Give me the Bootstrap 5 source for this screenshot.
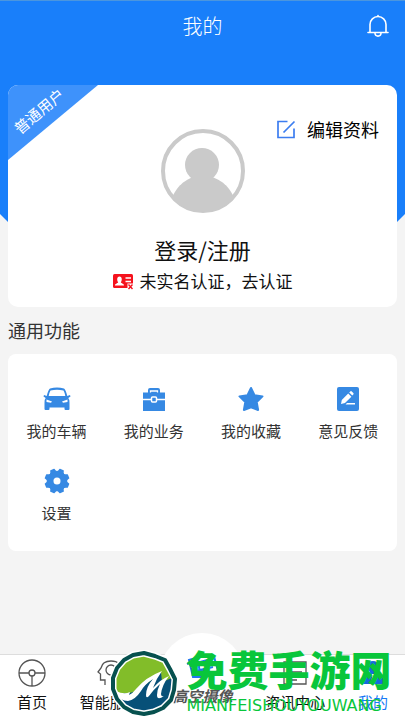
<!DOCTYPE html>
<html lang="zh-CN">
<head>
<meta charset="utf-8">
<meta name="viewport" content="width=device-width, initial-scale=1">
<title>我的</title>
<link href="https://cdn.jsdelivr.net/npm/bootstrap@5.3.0/dist/css/bootstrap.min.css" rel="stylesheet">
<style>
body{font-family:"Noto Sans CJK SC",sans-serif;background:#f4f4f4;color:#111}
svg{display:block;flex-shrink:0}
a,button{color:inherit;text-decoration:none}
.page-wrap{isolation:isolate}
.page-wrap::before{content:"";position:absolute;z-index:-1;inset:0 0 auto;height:224px;background:#197ffa;border-top:1px solid #4b96de;clip-path:polygon(0 0,100% 0,100% 214px,calc(100% - 10px) 100%,10px 100%,0 214px)}
.top-bar{height:52px;display:grid;grid-template-columns:1fr auto 1fr;padding:0 16px}
.top-title{font-size:20px;line-height:28px;font-weight:300}
.user-card{margin-top:33px;border-radius:10px;padding-bottom:14px}
.ribbon{width:90px;height:75px;isolation:isolate}
.ribbon::before{content:"";position:absolute;z-index:-1;inset:0;background:#3e92fb;clip-path:polygon(0 0,100% 0,0 100%)}
.ribbon-text{left:1px;top:16px;font-size:15px;line-height:20px;transform:rotate(-40deg)}
.profile-row{display:grid;grid-template-columns:1fr auto 1fr;padding-top:34px}
.avatar{margin-top:10px}
.edit-btn{font-size:18px;line-height:20px;margin-right:18px;gap:11px}
.login-link{font-size:22px;line-height:28px;margin-top:22px}
.verify-link{font-size:17px;line-height:24px;margin-top:6px;gap:7px}
.section-title{font-size:18px;line-height:25px;margin:11px 0;color:#333}
.tools-card{border-radius:8px;padding-top:32px;padding-bottom:1px}
.tool{font-size:15px;line-height:18px;gap:10px;margin-bottom:28px;color:#333}
.tab-bar{height:66px;padding:0 17px;border-top:1px solid #ddd;isolation:isolate}
.tab{font-size:15px;line-height:20px;gap:5px;padding-top:4px;white-space:nowrap}
.tab-main{padding-top:0;gap:1px;color:#555;font-style:italic}
.tab-main::before{content:"";position:absolute;z-index:-1;width:86px;height:86px;border-radius:50%;background:#fff;top:-22px;left:50%;margin-left:-43px}
.tab-current{color:#1779f5}
.brand{left:50%;margin-left:-93px;bottom:4px;gap:9px;pointer-events:none;color:#08c63b;white-space:nowrap}
.brand-name{font-size:41px;line-height:36px;font-weight:900}
.brand-latin{font-family:"DejaVu Sans",sans-serif;font-size:16px;line-height:20px;padding-top:10px}
</style>
<script src="https://cdn.jsdelivr.net/npm/bootstrap@5.3.0/dist/js/bootstrap.bundle.min.js"></script>
</head>
<body>
<div class="page-wrap position-relative min-vh-100 d-flex flex-column overflow-hidden">
  <header class="top-bar align-items-center text-white">
    <span></span>
    <h1 class="top-title m-0">我的</h1>
    <button class="btn p-0 border-0 ms-auto text-white" aria-label="通知">
      <svg width="22" height="24" viewBox="0 0 22 24" fill="none" stroke="currentColor" stroke-width="1.600" stroke-linecap="round"><path d="M3 18v-7.500a8 8 0 0 1 16 0V18M1 18.500h20M8 19.500c.5 3.500 5.500 3.500 6 0M11 1.500v1"/></svg>
    </button>
  </header>
  <main class="px-2">
    <section class="user-card bg-white position-relative overflow-hidden">
      <div class="ribbon position-absolute top-0 start-0 text-white"><div class="ribbon-text position-absolute">普通用户</div></div>
      <div class="profile-row">
        <span></span>
        <svg class="avatar" width="84" height="84" viewBox="0 0 84 84"><defs><clipPath id="face"><circle cx="42" cy="42" r="41"/></clipPath></defs><circle cx="42" cy="42" r="40" fill="#fff" stroke="#cacaca" stroke-width="4"/><g clip-path="url(#face)" fill="#cacaca"><circle cx="41" cy="36" r="17"/><path d="M10 72c5-16 15-21 22-24h19c8 3 18 8 23 24v12H10z"/></g></svg>
        <button class="edit-btn btn p-0 border-0 ms-auto align-self-start d-flex align-items-center text-black">
          <svg width="19" height="19" viewBox="0 0 19 19" fill="none" stroke="#3c7df0" stroke-width="1.700"><path d="M10.500 1.500H1v16h16V8.500M6.500 12.500l11-11"/></svg>编辑资料
        </button>
      </div>
      <a href="#login" class="login-link d-block text-center">登录/注册</a>
      <a href="#verify" class="verify-link d-flex justify-content-center align-items-center">
        <svg width="20" height="17" viewBox="0 0 20 17"><rect y="1" width="20" height="14" rx="1.500" fill="#f5121d"/><path d="M2 12.500c0-2 2.500-2 3.200-3C3.500 7 4 3.500 6.500 3.500S9.500 7 7.800 9.500c.7 1 3.200 1 3.200 3z" fill="#fff"/><path d="M12.500 5H18M12.500 8.500H18" stroke="#fff" stroke-width="1.300"/><path d="M14.500 10.500H20V17h-5.500z" fill="#fff"/><path d="M15.500 11.500l4 4.500m0-4.500l-4 4.500" stroke="#f5121d" stroke-width="1.400"/></svg>未实名认证，去认证
      </a>
    </section>
    <h2 class="section-title fw-normal">通用功能</h2>
    <section class="tools-card bg-white">
      <div class="row row-cols-4 g-0">
        <div class="col"><a href="#cars" class="tool d-flex flex-column align-items-center">
          <svg width="28" height="26" viewBox="0 0 28 26"><path fill="#3689e3" d="M7 2.500Q14 .5 21 2.500q1.500.5 3.300 7.500l2.700-1 .5 1.500-2.200 1.500Q27 14 26.500 17v6q0 1-1 1h-3q-1 0-1-1v-1.500h-15V23q0 1-1 1h-3q-1 0-1-1v-6Q1 14 2.700 12L.5 10.500 1 9l2.700 1Q5.500 3 7 2.500z"/><path fill="#fff" d="M7.500 4.500Q14 3 20.500 4.500 21.500 6 22.300 10H5.700Q6.500 6 7.500 4.500zM3.500 13.500l5.500 2-1 1.200-4.500-.7zM24.500 13.500l-5.500 2 1 1.200 4.500-.7z"/></svg>我的车辆</a></div>
        <div class="col"><a href="#business" class="tool d-flex flex-column align-items-center">
          <svg width="24" height="26" viewBox="0 0 24 26"><path fill="#3689e3" d="M1 6.500h5V4q0-2 2-2h8q2 0 2 2v2.500h5v6.300H1zM1 14.200h22V25H1z"/><path d="M8.500 6.500V5h7v1.500" fill="none" stroke="#fff" stroke-width="1.300"/><rect x="9.500" y="11" width="5" height="5" rx="1" fill="#3689e3" stroke="#fff" stroke-width="1.500"/></svg>我的业务</a></div>
        <div class="col"><a href="#favorites" class="tool d-flex flex-column align-items-center">
          <svg width="26" height="26" viewBox="0 0 26 26"><path fill="#3689e3" stroke="#3689e3" stroke-width="2" stroke-linejoin="round" d="M13 2l3.500 7.300 8 1.100-5.800 5.600 1.400 8L13 21.200 5.900 24l1.400-8-5.800-5.600 8-1.100z"/></svg>我的收藏</a></div>
        <div class="col"><a href="#feedback" class="tool d-flex flex-column align-items-center">
          <svg width="24" height="26" viewBox="0 0 24 26"><rect x="1" y="1" width="22" height="24" rx="2" fill="#3689e3"/><path d="M5 18l.8-4 6.400-6.500 3.200 3.200L9 17zM13.200 6.500l1-1q.8-.8 1.600 0l1.500 1.500q.8.800 0 1.600l-1 1zM11 17h8v1.600h-9.500z" fill="#fff"/></svg>意见反馈</a></div>
        <div class="col"><a href="#settings" class="tool d-flex flex-column align-items-center">
          <svg width="28" height="26" viewBox="-14 -14 28 28"><g fill="#3689e3" transform="rotate(22.500)"><circle r="10.800"/><g id="pair"><path id="tooth" d="M-4.500-9.500Q-2.800-11-2.600-13q.1-.5.600-.5h4q.5 0 .6.500.2 2 1.900 3.500z"/><use href="#tooth" transform="rotate(180)"/></g><use href="#pair" transform="rotate(45)"/><use href="#pair" transform="rotate(90)"/><use href="#pair" transform="rotate(135)"/></g><circle r="3.800" fill="#fff"/></svg>设置</a></div>
      </div>
    </section>
  </main>
  <nav class="tab-bar mt-auto bg-white position-relative d-flex justify-content-between">
    <a href="#home" class="tab d-flex flex-column align-items-center">
      <svg width="28" height="28" viewBox="0 0 28 28" fill="none" stroke="#555" stroke-width="1.300"><circle cx="14" cy="14" r="13"/><circle cx="14" cy="14" r="3"/><path d="M1 14h10M17 14h10M14 17v10"/></svg>首页</a>
    <a href="#smart" class="tab d-flex flex-column align-items-center">
      <svg width="28" height="28" viewBox="0 0 28 28" fill="none" stroke="#555" stroke-width="1.300"><path d="M9 26v-5H4.500v-6L2 13l3-4C6 4 10 2 15 2c7 0 11 4 11 10 0 5-4 7-4 14"/><circle cx="15" cy="11" r="5"/><path d="M15 16v5"/></svg>智能服务</a>
    <a href="#aerial" class="tab tab-main position-relative d-flex flex-column align-items-center fw-bold">
      <svg width="36" height="30" viewBox="0 0 36 30" fill="none" stroke="#2277f2" stroke-width="2"><path d="M5 5l24-7 5 18-12 6H9zM9 9l18-5M3 9l5-2M7 17l22-5"/><circle cx="19" cy="12" r="4"/></svg>高空摄像</a>
    <a href="#news" class="tab d-flex flex-column align-items-center">
      <svg width="28" height="28" viewBox="0 0 28 28" fill="none" stroke="#555" stroke-width="1.300"><path d="M3 3h22v22H3zM7 8h10M7 13h14M7 17h14M7 21h9"/></svg>资讯中心</a>
    <a href="#me" class="tab tab-current d-flex flex-column align-items-center" aria-current="page">
      <svg width="28" height="28" viewBox="0 0 28 28"><path d="M9 7q0-5 5-5t5 5q0 4-2 6 7 2 9 12H2q2-10 9-12-2-2-2-6z" fill="#1769df"/><path d="M12.500 15h3l-.8 2.500 1.300 5-2 2-2-2 1.300-5z" fill="#fff"/></svg>我的</a>
    <div class="brand position-absolute d-flex align-items-center">
      <svg width="68" height="66" viewBox="0 0 68 66"><path id="rim" d="M34 3l11 3 10 4 5 9 5 10-1 11-3 10-8 8-9 4-10 2-11-2-9-5-7-8-4-10V28l4-10 7-8 9-5z" fill="#82bd29"/><path d="M10 43q15 2 25-8L51 22l1 10 10-4 2 12-3 10-8 8-9 4-10 2-11-2-9-5z" fill="#075078"/><path d="M6 41q8 4 14 1l-1 3q4-2 7-6 10-12 26-18-6 8-9 17 8-9 16-12-7 9-8 18 0 3 3 2-7 5-7-1 0-5 3-11-7 6-11 12-3 3-3-1 0-8 7-16-8 5-12 12-6 9-13 10-8 0-12-7z" fill="#fff"/><path d="M34 3l11 3 10 4 5 9 5 10-1 11-3 10-8 8-9 4-10 2-11-2-9-5-7-8-4-10V28l4-10 7-8 9-5z" fill="none" stroke="#fff" stroke-width="7" stroke-linejoin="round"/><path d="M34 3l11 3 10 4 5 9 5 10-1 11-3 10-8 8-9 4-10 2-11-2-9-5-7-8-4-10V28l4-10 7-8 9-5z" fill="none" stroke="#07514f" stroke-width="4" stroke-linejoin="round"/></svg>
      <div><div class="brand-name">免费手游网</div><div class="brand-latin">MIANFEISHOUYOUWANG</div></div>
    </div>
  </nav>
</div>
</body>
</html>
